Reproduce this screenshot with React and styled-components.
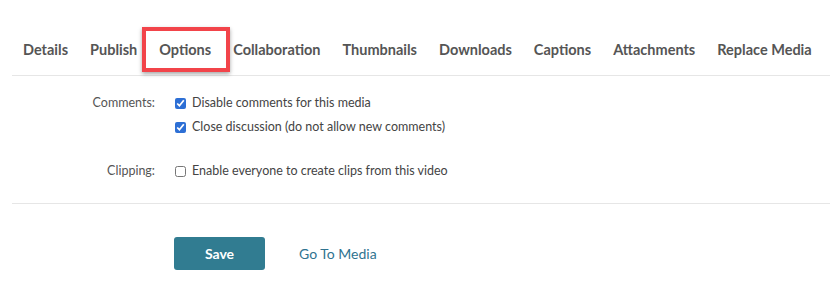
import React, { useState } from "react";
import styled, { createGlobalStyle } from "styled-components";

const GlobalStyle = createGlobalStyle`
  body {
    margin: 0;
    background: #fff;
    font-family: Lato, "Open Sans", sans-serif;
  }
`;

const Page = styled.div`
  width: 830px;
  height: 281px;
  overflow: hidden;
`;

const TabBar = styled.nav`
  display: flex;
  margin: 24px 0 0 12px;
  border-bottom: 1px solid #e6e6e6;
`;

const Tab = styled.a`
  position: relative;
  padding: 16px 11px 15px;
  font-size: 14.5px;
  line-height: 20px;
  font-weight: 700;
  color: #555;
  cursor: pointer;
  white-space: nowrap;
  ${(props) =>
    props.highlight &&
    `
    &::after {
      content: "";
      position: absolute;
      top: 3px;
      bottom: 3px;
      left: -6px;
      right: -8px;
      border: 4px solid #f2444a;
      box-shadow: 0 2px 4px rgba(0, 0, 0, 0.35);
    }
  `}
`;

const Form = styled.div`
  margin-left: 12px;
  padding-top: 15px;
  border-bottom: 1px solid #e6e6e6;
  padding-bottom: 20px;
`;

const Field = styled.div`
  display: grid;
  grid-template-columns: 143px 1fr;
  column-gap: 20px;
  margin-bottom: ${(props) => props.spacing || 0}px;
`;

const Label = styled.div`
  text-align: right;
  font-size: 12.5px;
  line-height: 24px;
  color: #555;
`;

const Options = styled.div`
  display: flex;
  flex-direction: column;
`;

const Check = styled.label`
  display: flex;
  align-items: center;
  gap: 6px;
  font-size: 12.5px;
  line-height: 24px;
  color: #444;
  cursor: pointer;

  input {
    width: 11px;
    height: 11px;
    margin: 0;
    accent-color: #2d6fd5;
  }
`;

const Actions = styled.div`
  display: flex;
  align-items: center;
  gap: 34px;
  padding: 33px 0 0 174px;
`;

const SaveButton = styled.button`
  width: 91px;
  height: 33px;
  border: none;
  border-radius: 3px;
  background: #317c91;
  color: #fff;
  font-family: inherit;
  font-size: 14px;
  font-weight: 700;
  cursor: pointer;
`;

const LinkButton = styled.a`
  font-size: 14px;
  color: #2f7390;
  cursor: pointer;
`;

const tabs = [
  "Details",
  "Publish",
  "Options",
  "Collaboration",
  "Thumbnails",
  "Downloads",
  "Captions",
  "Attachments",
  "Replace Media",
];

const App = () => {
  const [opts, setOpts] = useState({
    disable: true,
    close: true,
    clips: false,
  });
  const toggle = (key) => setOpts({ ...opts, [key]: !opts[key] });

  return (
    <Page>
      <GlobalStyle />
      <TabBar>
        {tabs.map((t) => (
          <Tab key={t} highlight={t === "Options"}>
            {t}
          </Tab>
        ))}
      </TabBar>
      <Form>
        <Field spacing={20}>
          <Label>Comments:</Label>
          <Options>
            <Check>
              <input
                type="checkbox"
                checked={opts.disable}
                onChange={() => toggle("disable")}
              />
              Disable comments for this media
            </Check>
            <Check>
              <input
                type="checkbox"
                checked={opts.close}
                onChange={() => toggle("close")}
              />
              Close discussion (do not allow new comments)
            </Check>
          </Options>
        </Field>
        <Field>
          <Label>Clipping:</Label>
          <Options>
            <Check>
              <input
                type="checkbox"
                checked={opts.clips}
                onChange={() => toggle("clips")}
              />
              Enable everyone to create clips from this video
            </Check>
          </Options>
        </Field>
      </Form>
      <Actions>
        <SaveButton>Save</SaveButton>
        <LinkButton>Go To Media</LinkButton>
      </Actions>
    </Page>
  );
};

export default App;
